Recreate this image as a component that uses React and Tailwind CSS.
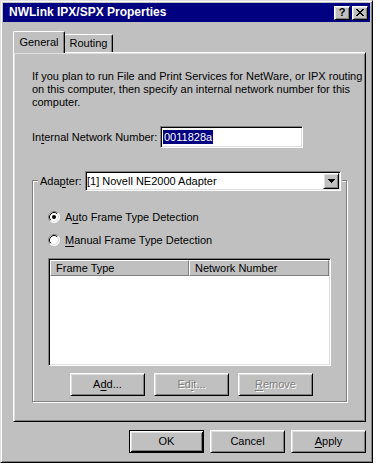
const raised =
  "border border-t-white border-l-white border-r-black border-b-black shadow-[inset_1px_1px_0_#dfdfdf,inset_-1px_-1px_0_#808080]";
const sunken =
  "border border-t-[#808080] border-l-[#808080] border-r-white border-b-white shadow-[inset_1px_1px_0_#000,inset_-1px_-1px_0_#dfdfdf]";

function Radio({ checked }) {
  return (
    <svg width="12" height="12" viewBox="0 0 12 12" className="shrink-0">
      <circle cx="6" cy="6" r="5.5" fill="#fff" />
      <path d="M2.11 9.89 A5.5 5.5 0 0 1 9.89 2.11" stroke="#808080" fill="none" />
      <path d="M9.89 2.11 A5.5 5.5 0 0 1 2.11 9.89" stroke="#fff" fill="none" />
      <path d="M2.82 9.18 A4.5 4.5 0 0 1 9.18 2.82" stroke="#000" fill="none" />
      <path d="M9.18 2.82 A4.5 4.5 0 0 1 2.82 9.18" stroke="#dfdfdf" fill="none" />
      {checked && <circle cx="6" cy="6" r="2" fill="#000" />}
    </svg>
  );
}

function Btn({ children, disabled, def }) {
  return (
    <div
      className={
        "w-[75px] h-[23px] flex items-center justify-center bg-[#c0c0c0] " +
        (def
          ? "border border-black shadow-[inset_1px_1px_0_#fff,inset_-1px_-1px_0_#000,inset_2px_2px_0_#dfdfdf,inset_-2px_-2px_0_#808080]"
          : raised) +
        (disabled ? " text-[#808080] [text-shadow:1px_1px_0_#fff]" : "")
      }
    >
      {children}
    </div>
  );
}

function U({ children }) {
  return <span className="underline underline-offset-[2px]">{children}</span>;
}

export default function App() {
  return (
    <div className="w-[380px] h-[468px] bg-white font-['Liberation_Sans',Arial,sans-serif] text-[11px] leading-[13px] text-black">
      <div className="w-[373px] h-[463px] bg-[#c0c0c0] border border-t-[#dfdfdf] border-l-[#dfdfdf] border-r-black border-b-black shadow-[inset_1px_1px_0_#fff,inset_-1px_-1px_0_#808080] p-[2px] flex flex-col">
        {/* Title bar */}
        <div className="h-[19px] bg-[#000080] flex items-center pl-[6px] pr-[2px]">
          <span className="text-white font-bold text-[12px] flex-1 whitespace-nowrap">
            NWLink IPX/SPX Properties
          </span>
          <div className="flex gap-[2px]">
            <div className={"w-[16px] h-[14px] bg-[#c0c0c0] flex items-center justify-center font-bold text-[11px] leading-none " + raised}>
              ?
            </div>
            <div className={"w-[16px] h-[14px] bg-[#c0c0c0] flex items-center justify-center " + raised}>
              <svg width="8" height="7" viewBox="0 0 8 7">
                <path d="M0 0h2v1h1v1h2V1h1V0h2v1H7v1H6v1H5v1h1v1h1v1h1v1H6V6H5V5H3v1H2v1H0V6h1V5h1V4h1V3H2V2H1V1H0z" fill="#000" />
              </svg>
            </div>
          </div>
        </div>

        {/* Tabs */}
        <div className="flex items-end ml-[10px] mt-[9px] h-[21px] relative z-10">
          <div className="h-[22px] w-[52px] bg-[#c0c0c0] border-l border-t border-r border-l-white border-t-white border-r-black rounded-t-[2px] shadow-[inset_-1px_0_0_#808080] flex items-center justify-center -mb-[1px]">
            General
          </div>
          <div className="h-[18px] w-[48px] bg-[#c0c0c0] border-t border-r border-t-white border-r-black rounded-tr-[2px] shadow-[inset_-1px_0_0_#808080] flex items-center justify-center">
            Routing
          </div>
        </div>

        {/* Tab panel */}
        <div className="ml-[10px] w-[353px] h-[370px] border border-t-white border-l-white border-r-black border-b-black shadow-[inset_1px_1px_0_#dfdfdf,inset_-1px_-1px_0_#808080] pl-[18px] pt-[17px] flex flex-col">
          <p className="whitespace-nowrap">
            If you plan to run File and Print Services for NetWare, or IPX routing
            <br />
            on this computer, then specify an internal network number for this
            <br />
            computer.
          </p>

          <div className="flex items-center mt-[17px] h-[22px]">
            <span className="w-[128px] whitespace-nowrap">
              In<U>t</U>ernal Network Number:
            </span>
            <div className={"w-[143px] h-[22px] bg-white flex items-center pl-[2px] " + sunken}>
              <span className="bg-[#000080] text-white px-[1px] leading-[14px]">0011828a</span>
            </div>
          </div>

          {/* Group box */}
          <div className="mt-[32px] w-[315px] h-[222px] border border-[#808080] shadow-[inset_1px_1px_0_#fff,1px_1px_0_#fff] flex flex-col">
            <div className="-mt-[10px] ml-[5px] w-fit bg-[#c0c0c0] pl-[2px] pr-[1px] flex items-center h-[20px]">
              <span className="w-[45px] whitespace-nowrap">
                Ada<U>p</U>ter:
              </span>
              <div className={"w-[256px] h-[20px] bg-white flex items-center pl-[1px] pr-[1px] " + sunken}>
                <span className="flex-1 whitespace-nowrap">[1] Novell NE2000 Adapter</span>
                <div className={"w-[16px] h-[16px] bg-[#c0c0c0] flex items-center justify-center " + raised}>
                  <svg width="7" height="4" viewBox="0 0 7 4">
                    <path d="M0 0h7v1H6v1H5v1H4v1H3V3H2V2H1V1H0z" fill="#000" />
                  </svg>
                </div>
              </div>
            </div>

            <div className="flex items-center gap-[5px] pl-[15px] mt-[18px] h-[16px]">
              <Radio checked />
              <span>
                A<U>u</U>to Frame Type Detection
              </span>
            </div>
            <div className="flex items-center gap-[5px] pl-[15px] mt-[7px] h-[16px]">
              <Radio />
              <span>
                <U>M</U>anual Frame Type Detection
              </span>
            </div>

            {/* List */}
            <div className={"ml-[15px] mt-[10px] w-[283px] h-[108px] bg-white p-[1px] " + sunken}>
              <div className="flex h-[16px]">
                <div className="w-[139px] bg-[#c0c0c0] border border-t-white border-l-white border-r-[#808080] border-b-[#808080] flex items-center pl-[5px]">
                  Frame Type
                </div>
                <div className="w-[140px] bg-[#c0c0c0] border border-t-white border-l-white border-r-[#808080] border-b-[#808080] flex items-center pl-[5px]">
                  Network Number
                </div>
              </div>
            </div>

            <div className="flex gap-[9px] ml-[37px] mt-[7px]">
              <Btn>
                A<U>d</U>d...
              </Btn>
              <Btn disabled>
                Ed<U>i</U>t...
              </Btn>
              <Btn disabled>
                <U>R</U>emove
              </Btn>
            </div>
          </div>
        </div>

        {/* Bottom buttons */}
        <div className="flex justify-end gap-[6px] mt-[8px] w-[363px]">
          <Btn def>OK</Btn>
          <Btn>Cancel</Btn>
          <Btn>
            <U>A</U>pply
          </Btn>
        </div>
      </div>
    </div>
  );
}
